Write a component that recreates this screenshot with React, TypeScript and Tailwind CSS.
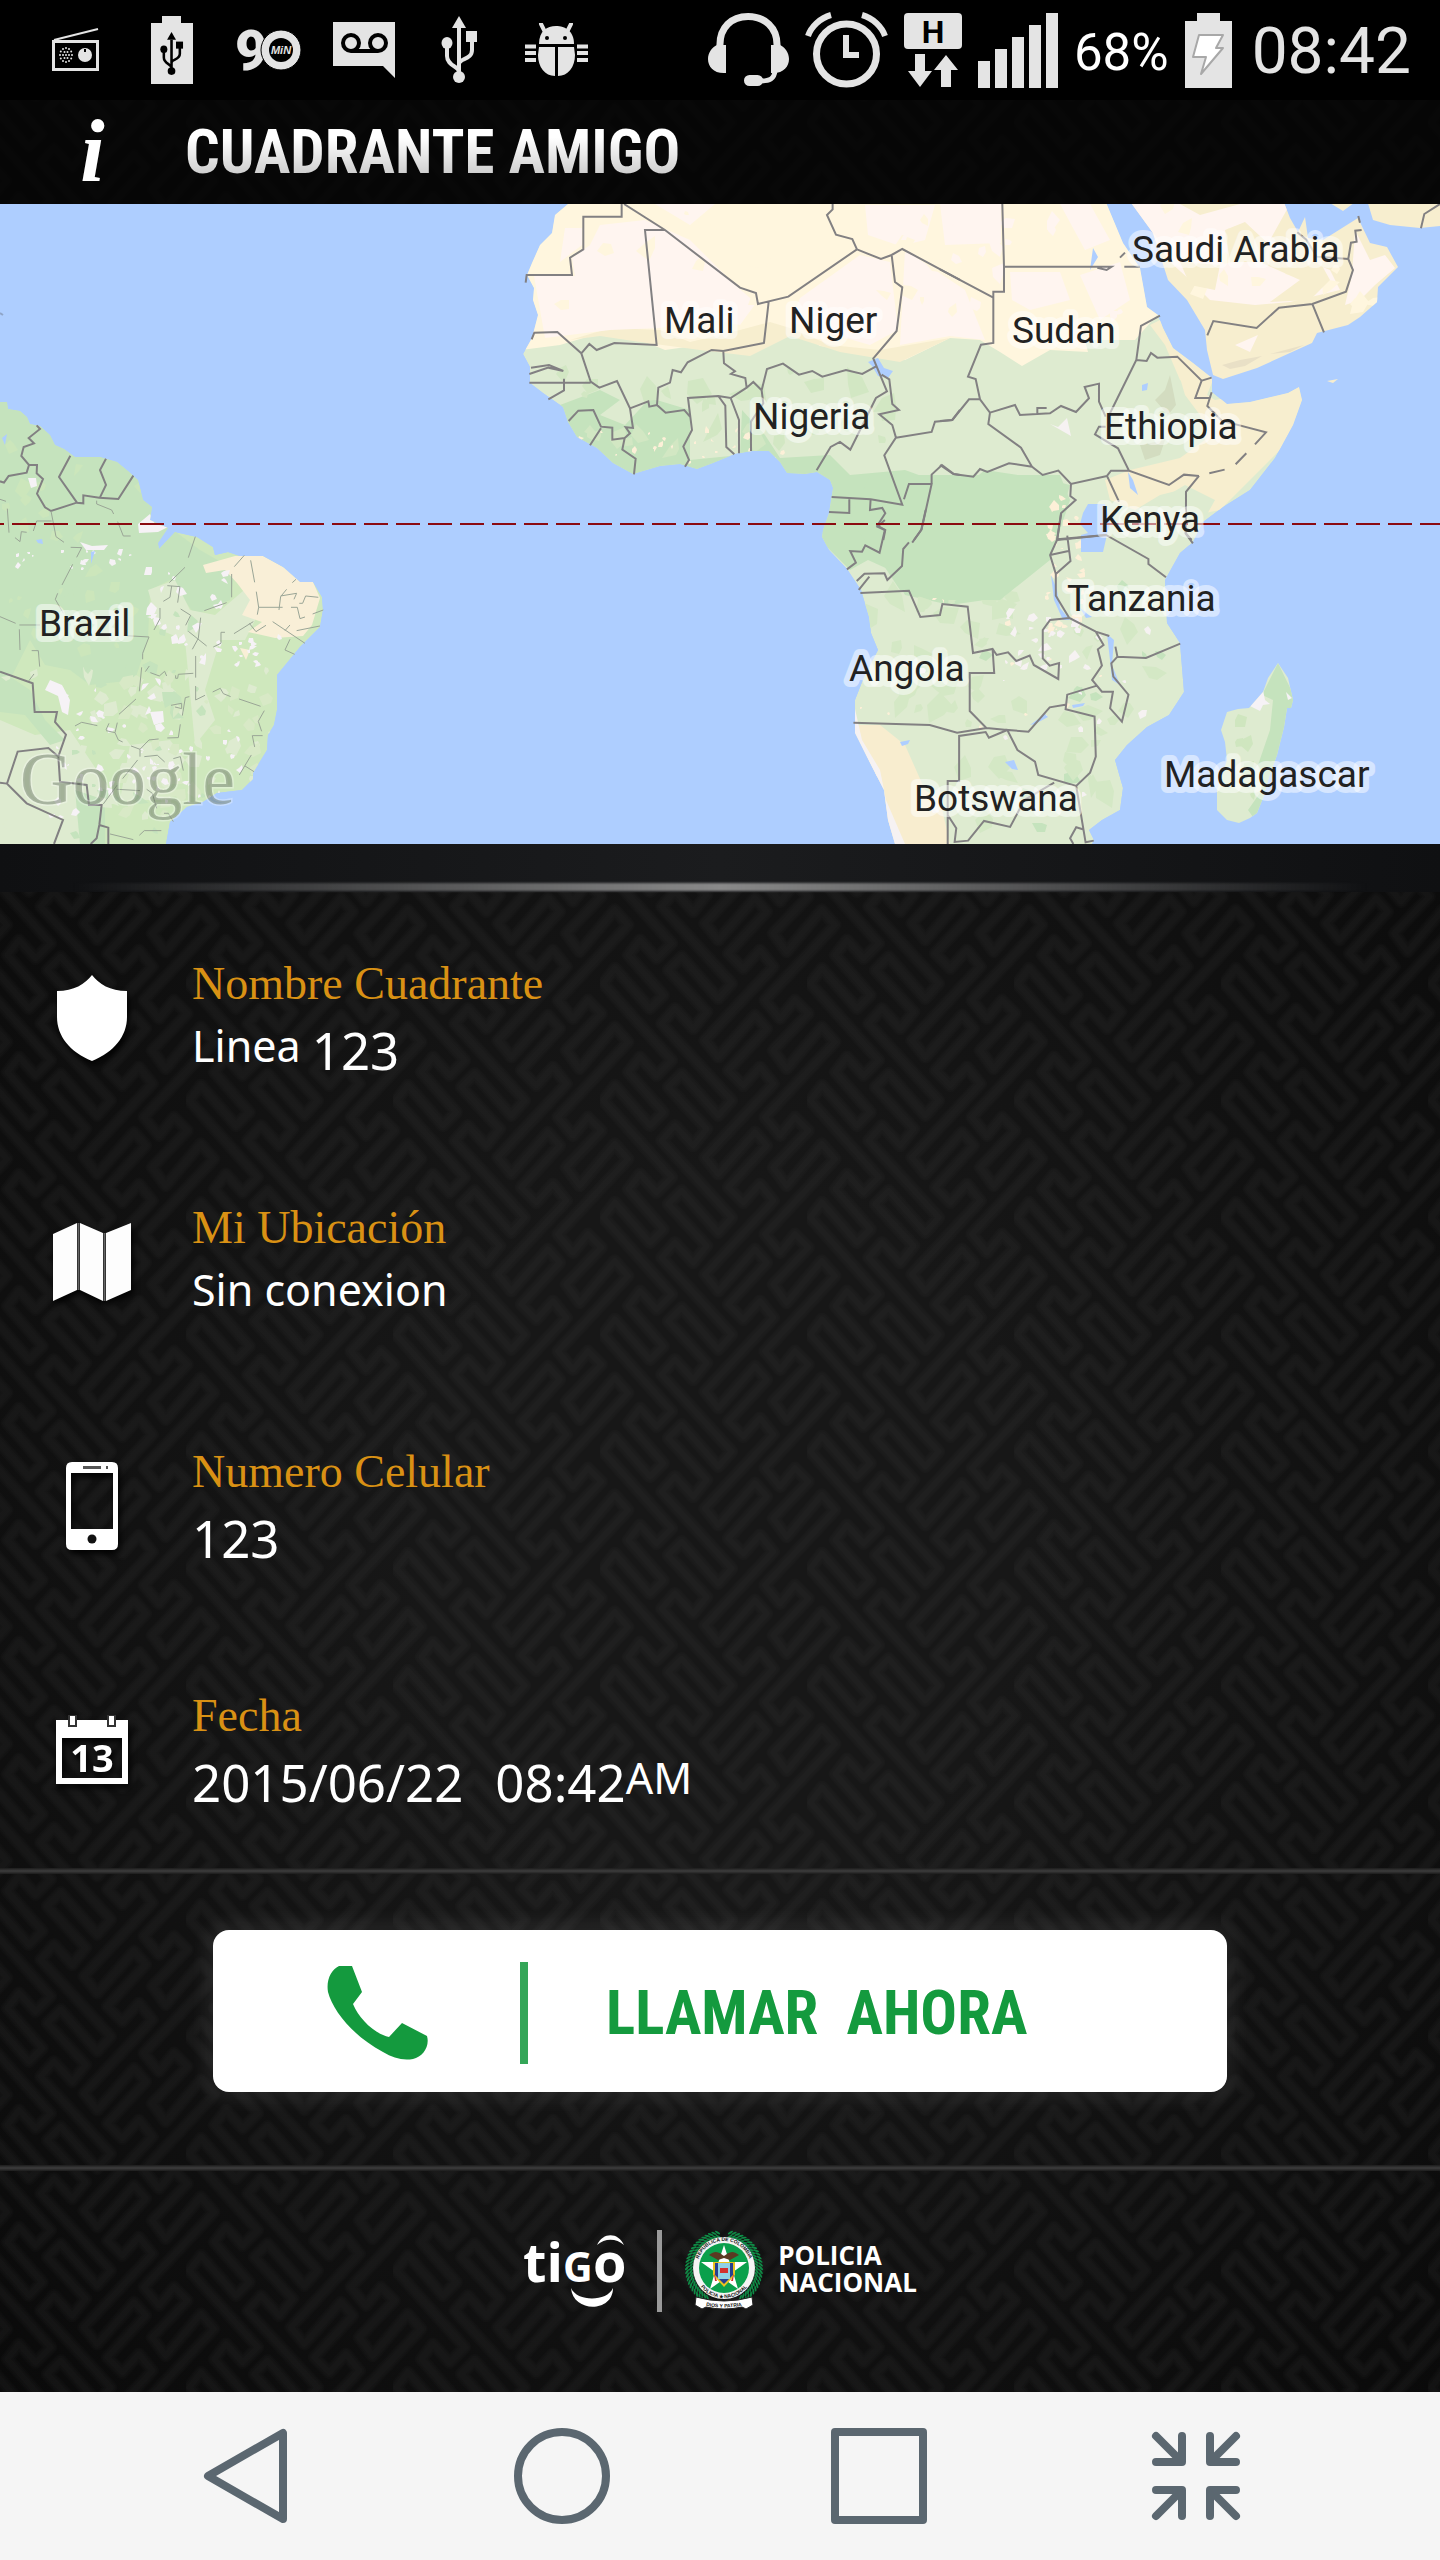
import React from "react";

const ICON = "#e4e4e4";
const SLATE = "#5b6770";

/* ---------- dark woven backdrop ---------- */

const SNAKES = [
  "M215,710L10,480L45,435L150,555L190,515L85,395L120,350L170,405L215,360L10,130L45,85L150,205L190,165L85,45L120,0L170,55L215,10L10,-220",
  "M395,830L185,600L225,555L280,615L320,565L205,440L245,400L355,525L395,480L185,250L225,205L280,265L320,215L205,90L245,50L355,175L395,130L185,-100L225,-145L280,-85L320,-135L205,-260",
  "M520,-270L315,-50L355,0L465,-125L500,-85L385,40L430,85L480,30L520,80L315,300L355,350L465,225L500,265L385,390L430,435L480,380L520,430L315,650",
  "M705,-45L495,180L540,235L585,180L625,220L520,330L560,385L665,260L705,305L495,530L540,585M705,-395L495,-170L540,-115L585,-170L625,-130L520,-20L560,35L665,-90L705,-45",
];

function Weave({ id, className }: { id: string; className: string }) {
  return (
    <svg className={className} aria-hidden="true">
      <defs>
        <pattern id={id} width="207" height="117" patternUnits="userSpaceOnUse" x="186" y="96">
          <g transform="scale(0.3333 0.3343)" fill="none" stroke="#fff" strokeLinejoin="round">
            {[-621, 0].map((dx) => (
              <g key={dx} transform={`translate(${dx} 0)`}>
                {SNAKES.map((d, i) => (
                  <g key={i}>
                    <path d={d} strokeWidth="38" opacity="0.012" />
                    <path d={d} strokeWidth="28" opacity="0.012" />
                    <path d={d} strokeWidth="16" opacity="0.012" />
                  </g>
                ))}
              </g>
            ))}
          </g>
        </pattern>
      </defs>
      <rect width="100%" height="100%" fill={`url(#${id})`} />
    </svg>
  );
}

/* ---------- map ---------- */

const AFRICA =
  "M568,200L568,204L555,215L552,233L540,245L532,263L527,275L534,288L533,300L538,315L532,338L523,354L530,367L530,383L543,393L563,407L568,422L577,437L597,448L613,463L633,474L660,466L680,464L697,469L713,463L735,454L752,451L769,451L780,462L787,473L805,474L817,472L830,480L833,488L829,513L823,530L822,537L829,550L847,569L861,590L869,617L871,633L878,650L864,677L855,700L855,733L867,757L884,790L888,820L895,844L1092,844L1094,840L1089,830L1102,820L1120,810L1123,788L1115,760L1127,745L1147,727L1169,715L1184,692L1180,643L1167,623L1165,580L1180,553L1193,542L1203,522L1223,507L1250,490L1275,458L1293,425L1302,400L1299,387L1288,393L1250,402L1227,404L1212,392L1212,378L1193,363L1173,348L1163,328L1158,315L1147,307L1140,268L1123,243L1105,200Z";
const ARABIA =
  "M1129,200L1153,233L1168,280L1187,300L1205,330L1207,350L1213,375L1223,379L1257,368L1312,343L1317,333L1348,325L1360,317L1377,302L1378,287L1398,267L1387,247L1370,243L1358,218L1323,240L1308,238L1305,217L1298,232L1290,218L1283,200Z";
const IRAN = "M1325,200L1343,211L1358,200ZM1367,200L1373,220L1390,225L1420,228L1440,226V200Z";
const AMERICA =
  "M0,402L7,402L8,409L20,411L27,417L30,424L40,426L50,435L55,445L64,449L75,457L100,457L117,462L128,471L138,480L143,500L152,507L150,520L168,528L158,543L159,549L175,532L197,537L213,547L215,555L228,552L240,556L263,556L283,567L300,582L313,582L322,597L323,610L320,627L300,647L277,675L277,710L274,725L268,735L267,750L253,773L253,779L242,790L217,793L203,802L187,807L170,822L166,844H0Z";
const MADAGASCAR =
  "M1278,663L1288,678L1293,700L1291,708L1287,708L1284,727L1277,755L1269,777L1263,798L1257,813L1250,818L1239,823L1227,820L1217,810L1217,790L1227,760L1225,742L1221,730L1227,712L1238,709L1249,708L1263,692L1268,678Z";

const BORDERS_WEST =
  "M425,12V50H310V148L270,173L276,225H140L137,248M432,12L555,90L780,263L828,279L834,312L925,290L1131,148L1117,117L1068,104L1041,45L1058,28V12M555,90H495L530,435L403,429L350,450L328,432L304,460L232,396L163,398L155,418M866,306L852,429L730,453L695,450L623,487L603,517L578,510L570,548L535,563L531,615L557,638L613,630L630,650M304,460L332,545L358,563L411,543L450,625L459,684L437,682L450,700L434,714L397,719V683L363,680L340,630L295,632L266,663M148,548H332M252,536V571L205,598M153,503L207,495L250,513L205,503L148,522M363,685L330,736M434,714L427,749L467,776L462,823M450,625L505,604L508,620L531,615M730,453L732,490L765,514L753,522L796,534L800,563L752,594L715,588L624,594L636,690L610,740L627,780L615,800M715,588L736,617L739,741L763,763M752,594L777,660V760M800,563L820,546L845,571L850,610L813,665V753M845,571L861,507L909,491L957,524L997,513L1027,530L1098,510L1147,522L1187,500M1131,148L1203,177L1235,165L1267,147L1440,240M1235,165L1245,246L1267,262L1250,393L1180,475L1221,574L1188,594L1111,749L1080,726L1052,741L1010,811M1205,524L1228,538L1237,612L1257,630L1198,643L1237,675L1248,713L1213,766L1267,914L1172,898L1055,891M1108,898V939L1047,936M1172,898L1170,930L1207,924L1216,940L1192,977L1216,990L1210,1020M1248,713L1355,696L1365,665L1417,660L1440,630M1272,898L1287,852H1355L1325,988L1302,1020M1355,852V824L1386,795L1422,822L1440,825";
const BORDERS_EAST =
  "M187,12L192,200V275H160V429L123,434L84,530L107,537L120,598L150,638L145,672L243,743L276,800M0,208L160,293M192,200H515L500,210L472,203M553,200H600M540,173L555,158M0,663L37,660L87,598H120M150,638L225,615L240,645L330,640L363,618L408,636L447,595L434,561L477,551V605L497,650M292,640V624H320M660,347L603,378L589,480L510,640M589,480L620,483L633,459L652,473L712,470L785,542L815,533M785,542L766,594H808M815,577L802,618L845,662L978,697L945,733M919,760L887,793M854,809L808,820M777,828L738,876V1000L755,1020M777,828L732,824L687,855L567,812L534,745L465,703L477,680H497M567,812H513L501,828L537,905M501,828L393,852L355,812L308,825L276,800L207,790L142,816L120,807L100,830L40,822L0,795M393,852L391,888L407,900L363,940L352,1018L497,1005M802,406L820,363L950,384L1017,323L1117,312L1218,275L1239,210L1225,177L1130,170L1100,120L1072,97M1117,312L1152,397M1225,177L1233,128L1250,125L1246,92L1265,90M1255,48L1260,68M1443,85L1453,42L1500,12";
const BORDERS_SOUTH =
  "M208,60L190,80L208,90L195,158L160,136L152,155L123,153L137,188L115,208M308,30L297,90L275,128M267,127L253,147L250,198L214,240L207,220L158,221L139,243M170,230L144,270M148,279L267,272L295,351L343,345L349,312L411,320L424,459L472,447L482,465L510,457L530,483L563,467L573,495L633,537L635,489L612,497L595,475V390L613,360L660,354M472,447L476,519H416V633L457,684L385,698L318,675L131,668M640,42L630,120L613,165L627,222V287L660,354L725,395L758,408M630,120L750,105L854,177V192L897,232M655,107L663,183L627,222M613,165L658,153M945,60V100L963,130M725,395L744,435L730,448L740,497L716,540L740,575H767L760,625L789,665L805,584L768,530L763,490L778,470L848,474L932,431M778,470L773,440M728,557L655,584L651,628L722,650L725,770L711,818L677,858L584,825L576,785L533,750L508,690L560,695L612,622L650,614M457,684L508,690L463,713L455,696L390,708V843H362V1032M362,945L383,985L379,1026L412,1022L451,963L515,981L550,900L623,848M677,858L700,1027L720,1022M693,988L677,982L662,1015L670,1032";
const BORDERS_AMERICA =
  "M110,136L120,147L86,174L102,190L71,201L64,228L87,255H111L110,280L129,297L111,341L135,382L153,393L230,368L250,370V346L298,353L355,357L400,287M87,255L80,278L26,288L12,308L0,304M211,227L177,291L231,368M318,236L300,270L318,315L300,352M0,875L98,910L104,996H171L165,1026L198,1064L175,1130L145,1104L53,1115L21,1211L80,1270L189,1320L162,1392M0,1208L21,1211M175,1130L180,1205L260,1215L267,1275H305L298,1335L290,1375L272,1392M298,1335L325,1343V1392";
const STATES_AMERICA =
  "M0,358L18,364M22,386L27,458M290,362V372L335,390L341,402M353,425L370,468H392M153,393L168,470L192,487M155,423H110L100,453M45,473L60,485L64,455L80,457M212,502L245,503L230,532M218,553L186,615M173,640L166,658L190,700M0,710L47,730M58,735H120M58,748L60,810M95,812H115L119,860M102,882L86,903M586,470L565,533M555,562L508,608M502,617L540,620L533,668M515,618L510,652L490,664M542,687L572,706L557,736M480,684V716L462,750M378,767L447,771L428,820V838M425,862L418,934M408,957L357,1003M225,1038L245,1027L292,1037M318,1050L327,1030M352,1028L345,1058L318,1052M345,1058L355,1080L368,1086M680,668L613,692M695,582V652M752,541L764,607M769,635L776,682L772,704M776,682H848M837,690L842,650L860,628M842,648L890,640L882,658M733,526L703,560M888,598L877,608M955,652L917,648L908,670H898M873,682H892L900,716L915,711M970,690L938,702M960,738L890,752M818,725L915,790M870,735L855,752M870,778L855,810L884,823M760,725L702,761M748,730L768,755L798,736M675,757H663V790L640,801M602,713L595,775L577,808M565,754L620,798M587,828V893M587,918V960L615,946M638,936L661,925L670,941L692,950M717,957L782,979M793,992L775,1024L785,1054M788,1067H757L764,1101M754,1125L718,1185M735,1158L762,1175M568,950L556,953L547,1007M541,1033L535,1073L502,1074M476,1077L447,1080L420,1108L393,1098M420,1108V1130M433,1130L472,1126L494,1146M413,1140L368,1196M520,1136L541,1130L550,1172M352,1215L310,1272M350,1228L420,1232M440,1228L457,1240L470,1285M492,1300H505L520,1325M580,880L535,883L533,895H527V886M451,878L478,888L494,874L500,888M448,858L436,875M330,1362L400,1379M418,1366L433,1352H484M513,976L545,970V986L525,981";

function scatter(seed: number, n: number, x: number, y: number, w: number, h: number, size: number) {
  let s = seed;
  const r = () => {
    s = (s * 1103515245 + 12345) % 2147483648;
    return s / 2147483648;
  };
  let d = "";
  for (let i = 0; i < n; i++) {
    const cx = x + r() * w;
    const cy = y + r() * h;
    const k = size * (0.4 + r());
    const a0 = r() * 6;
    for (let j = 0; j < 5; j++) {
      const a = a0 + (j / 5) * 6.28;
      const q = k * (0.3 + r() * 0.9);
      d += `${j ? "L" : "M"}${Math.round(cx + Math.cos(a) * q)},${Math.round(cy + Math.sin(a) * q)}`;
    }
    d += "Z";
  }
  return d;
}

const LABELS: [string, number, number][] = [
  ["Saudi Arabia", 1132, 262],
  ["Mali", 664, 333],
  ["Niger", 789, 333],
  ["Sudan", 1012, 343],
  ["Nigeria", 753, 429],
  ["Ethiopia", 1104, 439],
  ["Kenya", 1100, 532],
  ["Brazil", 39, 636],
  ["Tanzania", 1067, 611],
  ["Angola", 849, 681],
  ["Botswana", 914, 811],
  ["Madagascar", 1164, 787],
];

function WorldMap() {
  return (
    <svg
      role="img"
      aria-label="Mapa"
      viewBox="0 204 1440 640"
      preserveAspectRatio="xMidYMid slice"
      className="block h-[640px] w-full bg-[#aeceff]"
    >
      <defs>
        <clipPath id="africa"><path d={AFRICA} /></clipPath>
        <clipPath id="arabia"><path d={ARABIA + IRAN} /></clipPath>
        <clipPath id="america"><path d={AMERICA} /></clipPath>
        <clipPath id="madagascar"><path d={MADAGASCAR} /></clipPath>
      </defs>

      <g clipPath="url(#africa)">
        <path d={AFRICA} fill="#deebd0" />
        <path fill="#fff6de" d="M500,200H1180V345L1157,315L1135,340L1085,340L1088,352L1050,350L1022,366L1000,352L980,340L950,338L905,360L880,355L850,350L820,346L790,328L750,348L700,345L665,350L640,340L600,333L560,345L520,350Z" />
        <path fill="#f7eecf" d="M570,340L610,328L660,330L690,342L740,330L770,322L790,328L830,345L880,350L950,338L900,362L840,352L790,336L750,356L700,350L640,342L600,336Z" />
        <path fill="#fff5f0" d="M534,276H575L572,258L590,245L600,225L645,220L690,240L735,285L756,303L740,325L700,318L660,328L610,330L545,338ZM565,228H582V245L560,262ZM655,204L715,204L690,225ZM800,298L860,255L890,262L898,330L870,345L790,322ZM865,205H935L925,240L900,246L868,235ZM940,204H1001V243L945,245ZM905,250L965,290L985,340L950,336L900,345ZM1010,272H1060L1070,300L1030,310L1012,300ZM1080,275L1120,262L1130,300L1100,320ZM1060,204L1090,204L1110,240L1085,250Z" />
        <path fill="#fff6de" d={scatter(11, 24, 540, 205, 560, 110, 10)} />
        <path fill="#fff5f0" d={scatter(27, 18, 900, 205, 240, 120, 10)} />
        <path fill="#c5e3bd" d="M560,405L600,390L620,400L600,415L625,425L650,398L690,410L690,460L740,455L742,410L765,435L780,458L830,455L850,475L905,470L960,490L985,470L1050,480L1070,485L1060,520L1045,560L1010,555L985,600L950,605L905,595L890,570L868,560L850,570L820,540L820,480L700,480L600,475L560,430Z" />
        <path fill="#d4e8c5" d={scatter(5, 60, 640, 580, 400, 140, 14)} />
        <path fill="#d2e7c3" d={scatter(8, 30, 560, 370, 340, 80, 11)} />
        <path fill="#c5e3bd" d={scatter(13, 12, 860, 580, 320, 260, 10)} />
        <path fill="#d4e8c5" d={scatter(17, 34, 880, 620, 300, 220, 11)} />
        <path fill="#c5e3bd" d="M870,475H1060L1070,500L1060,530L1050,560L1000,600H930L900,590L880,560L850,520Z" />
        <path fill="#f7eecf" d="M1180,378L1215,400L1310,380L1300,430L1220,510L1195,515L1180,490L1160,495L1135,510L1110,500L1105,480L1130,470L1180,458L1205,440L1200,415L1185,395ZM1160,320L1215,375L1205,400L1180,380L1165,345L1150,325Z" />
        <path fill="#deebd0" d="M1160,500L1185,485L1215,500L1190,545H1160Z" />
        <path fill="#f8edcf" d="M855,725L880,725L905,745L925,790L940,800L950,844H890L880,790Z" />
        <path fill="#f6f2f2" d="M853,700L862,740L880,770L886,800L905,844H893L880,790L853,735ZM1050,424L1058,427L1067,418L1071,436Z" />
        <path fill="#fdf0d8" d={scatter(31, 24, 570, 430, 220, 35, 3) + scatter(3, 36, 1045, 490, 40, 150, 5) + scatter(44, 16, 860, 580, 250, 150, 3)} />
        <path fill="#f6f2f2" d={scatter(9, 22, 990, 610, 90, 60, 5) + scatter(71, 20, 870, 620, 280, 190, 4)} />
        <path fill="#d3dcc0" d="M1170,375L1176,405L1168,415L1155,400L1165,390ZM1140,445L1165,440L1160,455L1145,460Z" />
        <path fill="#aeceff" d="M868,362L878,358L884,368L893,371L888,378L878,376L872,366ZM1142,385L1148,383L1147,390L1142,391ZM1088,504L1105,504L1110,522L1103,552L1081,552V535L1088,533L1080,524L1083,513ZM1128,472L1133,480L1138,495L1130,488ZM1051,575L1057,590L1060,608L1070,620L1063,620L1054,600ZM1080,608L1092,617L1086,618ZM1107,634L1114,640L1112,665L1120,685L1112,680L1110,660ZM1090,270L1093,248L1098,257ZM1072,705L1085,703L1083,706L1073,708ZM1030,725L1045,714L1048,717L1035,724ZM1005,762L1014,760L1018,770L1012,769ZM900,742L910,740L908,744L902,746Z" />
      </g>

      <path d={ARABIA + IRAN} fill="#f7eecf" />
      <g clipPath="url(#arabia)">
        <path fill="#fff5f0" d="M1130,204H1180L1200,215L1240,204H1290L1270,240L1310,262L1330,270L1340,290L1290,302L1255,305L1210,300L1190,280L1170,262ZM1355,230L1370,260L1385,255L1395,268L1375,285L1360,300L1345,305L1352,275ZM1235,345L1258,335L1250,352Z" />
        <path fill="#fff6de" d={scatter(23, 16, 1140, 205, 240, 100, 10)} />
        <path fill="#f7eecf" d="M1225,230L1245,222L1275,250L1320,262L1330,280L1310,300L1270,302L1300,280L1260,262L1230,262ZM1180,262L1220,265L1215,290L1190,285Z" />
        <path fill="#e9e0c6" d="M1222,365L1240,360L1262,356L1245,366L1230,369ZM1270,354L1304,345L1290,352Z" />
      </g>
      <path d="M1327,381L1338,379L1333,383Z" fill="#f7eecf" />

      <g clipPath="url(#america)">
        <path d={AMERICA} fill="#cfe8bd" />
        <path fill="#c5e3bd" d="M0,400H160V520L200,550L235,570L230,600L195,615L170,580L150,590L148,640L135,680L90,685L70,670L45,665L30,640L0,700V550Z" />
        <path fill="#deebd0" d="M0,720L35,735L70,730L90,760L110,790L95,844H0ZM148,590L175,580L190,610L215,615L250,585L260,610L245,640L220,640L205,690L215,720L195,745L185,640L160,630ZM130,745L170,740L185,760L160,800L120,800Z" />
        <path fill="#c5e3bd" d="M75,790L105,800V844H80ZM0,670L30,690L45,720L65,740L50,745L25,715L0,712Z" />
        <path fill="#f9efd7" d="M203,565L235,556H263L285,568L303,582H313L320,598L312,625L303,636L275,638L248,632L262,622L242,615L250,600L237,583L225,570L206,573ZM240,648L250,650L246,660Z" />
        <path fill="#deebd0" d={scatter(15, 46, 0, 660, 280, 180, 8)} />
        <path fill="#c5e3bd" d={scatter(19, 30, 60, 560, 150, 280, 7)} />
        <path fill="#cce6bb" d={scatter(29, 26, 0, 430, 150, 240, 8)} />
        <path fill="#d8e9c6" d={scatter(39, 34, 120, 660, 150, 160, 8)} />
        <path fill="#f6f2f6" d={scatter(51, 24, 145, 570, 80, 90, 5) + scatter(61, 36, 40, 680, 120, 140, 4) + scatter(63, 32, 130, 730, 110, 80, 3) + scatter(73, 14, 230, 635, 50, 30, 4) + scatter(77, 16, 15, 545, 120, 25, 3)} />
        <path fill="#f6f2f6" d="M80,542L92,546L108,545L104,550L86,550ZM138,524L150,514L155,524L168,527L158,532L139,533ZM28,478L36,478L37,486L31,488ZM50,680L62,685L70,700L68,715L62,712L58,696L45,690ZM150,712L163,711L164,722L154,725Z" />
        <path fill="#aeceff" d="M91,552L95,551L91,564ZM36,540L42,539L43,544L38,543ZM2,438L7,434L5,445Z" />
      </g>

      <path d={MADAGASCAR} fill="#deebd0" />
      <g clipPath="url(#madagascar)">
        <path fill="#c5e3bd" d="M1278,663L1296,700L1275,770L1255,820L1248,810L1262,790L1258,765L1270,730L1273,700L1262,695Z" />
        <path fill="#cfe6bf" d={scatter(83, 8, 1220, 700, 50, 110, 7)} />
        <path fill="#f6f2f6" d="M1250,706L1263,690L1265,700L1270,704L1263,705L1260,711ZM1286,692L1292,698L1288,700Z" />
      </g>

      <g fill="none" stroke="#828082" strokeWidth="2">
        <path vectorEffect="non-scaling-stroke" transform="matrix(.3333 0 0 .3333 480 200)" d={BORDERS_WEST} />
        <path vectorEffect="non-scaling-stroke" transform="matrix(.3333 0 0 .3333 940 200)" d={BORDERS_EAST} />
        <path vectorEffect="non-scaling-stroke" transform="matrix(.408 0 0 .3333 800 500)" d={BORDERS_SOUTH} />
        <path vectorEffect="non-scaling-stroke" transform="matrix(.3333 0 0 .3333 0 380)" d={BORDERS_AMERICA} />
        <path vectorEffect="non-scaling-stroke" strokeWidth="1" stroke="#9aa596" transform="matrix(.3333 0 0 .3333 0 380)" d={STATES_AMERICA} />
      </g>
      <path d="M0,313L3,315" stroke="#8fa5c8" strokeWidth="2" />

      <path d="M-20,524H1440" stroke="#8b0a10" strokeWidth="2" strokeDasharray="24 8" />

      <g fontFamily="Roboto, sans-serif" fontSize="37" fill="#222" stroke="#fff" strokeOpacity="0.5" strokeWidth="12" strokeLinejoin="round" paintOrder="stroke">
        {LABELS.map(([name, x, y]) => (
          <text key={name} x={x} y={y}>{name}</text>
        ))}
      </g>
      <text x="20" y="804" fontFamily="Liberation Serif, serif" fontSize="73" fill="#5a6a55" fillOpacity="0.45" stroke="#fff" strokeOpacity="0.3" strokeWidth="3" paintOrder="stroke">
        Google
      </text>
    </svg>
  );
}

/* ---------- status bar ---------- */

function Usb({ color }: { color: string }) {
  return (
    <g fill="none" stroke={color} strokeWidth="4">
      <path d="M18,12V60M18,56C18,50 6,50 6,40V28M18,48C18,42 31,44 31,34V22" />
      <path d="M18,0L25,12H11Z" fill={color} stroke="none" />
      <ellipse cx="18" cy="61" rx="6" ry="6" fill={color} stroke="none" />
      <ellipse cx="6" cy="27" rx="5.500" ry="6" fill={color} stroke="none" />
      <rect x="25" y="15" width="11" height="11" fill={color} stroke="none" />
    </g>
  );
}

function Cell({ children }: { children: React.ReactNode }) {
  return <span className="flex w-24 shrink-0 justify-center">{children}</span>;
}

function StatusBar() {
  const dots: [number, number][] = [];
  [[0, 1], [3, 6], [6, 12]].forEach(([r, n]) => {
    for (let i = 0; i < n; i++) dots.push([14 + r * Math.cos((i / n) * 6.283), 27 + r * 1.15 * Math.sin((i / n) * 6.283)]);
  });
  return (
    <div className="flex h-[100px] items-center bg-black pr-[29px] pl-7 font-[Roboto,sans-serif] text-[#e4e4e4]">
      <Cell>
        <svg width="48" height="44" viewBox="0 0 48 44" aria-hidden="true">
          <path d="M2,12L46,1" stroke={ICON} strokeWidth="2" />
          <rect x="1.500" y="13.500" width="44" height="28" fill="none" stroke={ICON} strokeWidth="3" />
          {dots.map(([x, y], i) => <circle key={i} cx={x} cy={y} r="1" fill={ICON} />)}
          <circle cx="33" cy="27" r="7" fill={ICON} />
          <path d="M33,21V24" stroke="#000" strokeWidth="2" />
        </svg>
      </Cell>
      <Cell>
        <svg width="42" height="68" viewBox="0 0 42 68" aria-hidden="true">
          <path d="M11,0H30V7H42V68H0V7H11Z" fill={ICON} />
          <g transform="translate(9 16) scale(.64)"><Usb color="#000" /></g>
        </svg>
      </Cell>
      <Cell>
        <svg width="70" height="72" viewBox="-3 -15 70 72" aria-label="90 Min">
          <text x="-1" y="41" fontFamily="Roboto, sans-serif" fontWeight="900" fontSize="56" fill={ICON}>9</text>
          <circle cx="45" cy="21" r="20" fill={ICON} stroke="#000" strokeWidth="1" />
          <circle cx="45" cy="21" r="12" fill="#000" />
          <text x="45" y="25" textAnchor="middle" fontFamily="Liberation Sans, sans-serif" fontStyle="italic" fontWeight="700" fontSize="11" fill={ICON}>MiN</text>
        </svg>
      </Cell>
      <Cell>
        <svg width="62" height="56" viewBox="0 0 62 56" aria-hidden="true">
          <path d="M0,0H62V56L50,44H0Z" fill={ICON} />
          <g fill="none" stroke="#000" strokeWidth="4">
            <circle cx="18" cy="21" r="8" />
            <circle cx="45" cy="21" r="8" />
            <path d="M18,29H45" />
          </g>
        </svg>
      </Cell>
      <Cell>
        <svg width="38" height="68" viewBox="0 0 38 68" aria-hidden="true"><Usb color={ICON} /></svg>
      </Cell>
      <Cell>
        <svg width="63" height="54" viewBox="0 0 63 54" aria-hidden="true">
          <g stroke={ICON} strokeWidth="4">
            <path d="M16,1L20,9M46,1L42,9" strokeLinecap="round" />
            <path d="M0,23.500H11M0,30H11M0,37H11M52,23.500H63M52,30H63M52,37H63" />
          </g>
          <path d="M14,21C14,8 22,3 31,3S49,8 49,21Z" fill={ICON} />
          <path d="M14,24H30V53C20,53 13,44 13,32ZM33,24H49L50,32C50,44 43,53 33,53Z" fill={ICON} />
          <circle cx="22" cy="15" r="2" />
          <circle cx="40" cy="15" r="2" />
        </svg>
      </Cell>

      <div className="ml-auto flex shrink-0 items-center gap-4">
        <svg width="81" height="74" viewBox="0 0 81 74" aria-hidden="true">
          <path d="M12,34C11,14 24,3.500 40,3.500S70,14 69,34" fill="none" stroke={ICON} strokeWidth="7" />
          <path d="M18,32V60C6,61 0,54 0,46C0,40 4,34 9,32ZM63,32V60C75,61 81,54 81,46C81,40 77,34 72,32Z" fill={ICON} />
          <path d="M67,58C66,66 62,68 52,68" fill="none" stroke={ICON} strokeWidth="5" />
          <rect x="36" y="62" width="19" height="11" rx="5.500" fill={ICON} />
        </svg>
        <svg width="83" height="76" viewBox="0 0 83 76" aria-hidden="true">
          <g fill="none" stroke={ICON}>
            <circle cx="41.500" cy="42" r="30" strokeWidth="7" />
            <path d="M3,24C6,15 15,6 26,3M80,24C77,15 68,6 57,3" strokeWidth="6" />
            <path d="M41,23V43H54" strokeWidth="6" />
          </g>
        </svg>
        <svg width="58" height="75" viewBox="0 0 58 75" aria-label="H">
          <rect width="58" height="36" rx="4" fill={ICON} />
          <text x="29" y="30" textAnchor="middle" fontFamily="Roboto, sans-serif" fontWeight="700" fontSize="32" fill="#000">H</text>
          <path d="M11,41H21V58H28L16,74L4,58H11ZM37,74H47V57H54L42,42L30,57H37Z" fill={ICON} />
        </svg>
        <svg width="80" height="75" viewBox="0 0 80 75" aria-hidden="true">
          <path fill={ICON} d="M0,48H12V75H0ZM17,36H29V75H17ZM34,24H46V75H34ZM51,12H63V75H51ZM68,0H80V75H68Z" />
        </svg>
        <span className="pt-1 text-[51px] leading-none text-white">68%</span>
        <svg width="47" height="75" viewBox="0 0 47 75" aria-hidden="true">
          <path d="M12,0H35V8H47V75H0V8H12Z" fill={ICON} />
          <path d="M14,22H38L31,35H38L16,61L21,44H8Z" fill="#fff" stroke="#a8a8a8" strokeWidth="2" strokeLinejoin="round" />
        </svg>
        <time className="ml-1 pt-1 text-[64px] leading-none">08:42</time>
      </div>
    </div>
  );
}

/* ---------- list icons ---------- */

const shadow = "drop-shadow-[2px_4px_3px_rgba(0,0,0,0.9)]";

function ShieldIcon() {
  return (
    <svg width="72" height="86" viewBox="0 0 72 86" className={shadow} aria-hidden="true">
      <path d="M36,0C43,9 54,16 71,16V42C71,61 58,77 36,86C14,77 1,61 1,42V16C18,16 29,9 36,0Z" fill="#fff" />
    </svg>
  );
}
function MapIcon() {
  return (
    <svg width="78" height="78" viewBox="0 0 78 78" className={shadow} aria-hidden="true">
      <path d="M0,11L24,0V67L0,78ZM27,0L50,10V78L27,67ZM53,10L78,0V67L53,78Z" fill="#fdfdfd" />
      <path d="M25.500,0V67M51.500,10V78" stroke="#666" strokeWidth="2" />
    </svg>
  );
}
function PhoneIcon() {
  return (
    <svg width="54" height="90" viewBox="0 0 54 90" className={shadow} aria-hidden="true">
      <path fillRule="evenodd" d="M7,1H47Q53,1 53,7V83Q53,89 47,89H7Q1,89 1,83V7Q1,1 7,1ZM6,12V68H48V12Z" fill="#fff" />
      <path d="M18,6.500H36M41,6.500H43" stroke="#555" strokeWidth="3" />
      <circle cx="27" cy="78" r="4.500" fill="#111" />
    </svg>
  );
}
function CalendarIcon() {
  return (
    <svg width="74" height="70" viewBox="0 0 74 70" className={shadow} aria-label="13">
      <path fillRule="evenodd" d="M1,5H73V69H1ZM7,23V63H67V23Z" fill="#fff" />
      <path d="M14,0H21V11H14ZM53,0H60V11H53Z" fill="#fff" stroke="#333" strokeWidth="2" />
      <text x="37" y="57" textAnchor="middle" fontFamily="Open Sans, sans-serif" fontWeight="700" fontSize="38" fill="#fff">13</text>
    </svg>
  );
}

function Row({ icon, label, children }: { icon: React.ReactNode; label: string; children: React.ReactNode }) {
  return (
    <div className="flex h-[244px] items-center">
      <div className="flex w-[192px] shrink-0 justify-center pr-2">{icon}</div>
      <div>
        <dt className="font-['Liberation_Serif',serif] text-[46px] leading-[56px] text-[#d99114]">{label}</dt>
        <dd className="mt-2 flex min-h-[60px] items-start font-['Noto_Sans',sans-serif] text-[51px] leading-[60px] text-white">
          {children}
        </dd>
      </div>
    </div>
  );
}

function Rule() {
  return <div className="h-[6px] bg-linear-to-b from-[#1c1c1c] via-[#3d3d3d] to-[#1c1c1c]" />;
}

/* ---------- footer logos ---------- */

function TigoLogo() {
  return (
    <svg width="104" height="100" viewBox="0 -12 104 100" aria-label="tigo">
      <g fontFamily="Open Sans, sans-serif" fontWeight="700" fill="#fff">
        <text x="0" y="49" fontSize="54">ti</text>
        <text x="40" y="49" fontSize="41">G</text>
        <text x="70" y="49" fontSize="54">o</text>
      </g>
      <path d="M74,12C80,-1 95,-1 101,12C93,5 82,5 74,12Z" fill="#fff" />
      <path d="M48,55C54,69 84,69 90,55C90,80 50,80 48,55Z" fill="#fff" />
    </svg>
  );
}

function PoliceCrest() {
  const leaves = [];
  for (let i = 0; i < 26; i++) {
    const a = ((-80 + i * 5.6) * Math.PI) / 180;
    leaves.push([Math.cos(a), Math.sin(a), -80 + i * 5.6]);
  }
  return (
    <svg width="80" height="84" viewBox="0 -2 80 84" aria-label="Dios y Patria">
      <defs>
        <path id="arcTop" d="M13,37A27,27 0 0 1 67,37" />
        <path id="arcBottom" d="M10,37A30,30 0 0 0 70,37" />
        <path id="ribbon" d="M14,73Q40,80 66,73" />
      </defs>
      {leaves.map(([c, s, a], i) => (
        <g key={i} fill="#0f8a45">
          {[33, 37].map((r) => (
            <React.Fragment key={r}>
              <ellipse cx={40 + c * r} cy={38 + s * r} rx="3" ry="1" transform={`rotate(${a + 50} ${40 + c * r} ${38 + s * r})`} />
              <ellipse cx={40 - c * r} cy={38 + s * r} rx="3" ry="1" transform={`rotate(${-a - 50} ${40 - c * r} ${38 + s * r})`} />
            </React.Fragment>
          ))}
        </g>
      ))}
      <circle cx="40" cy="37" r="31" fill="#f4f4f4" />
      <circle cx="40" cy="37" r="25" fill="#0aa04c" />
      <path fill="#fff" d="M40,14L45.500,31H63L49,41L54,58L40,48L26,58L31,41L17,31H34.500Z" />
      <path fill="#5a3a22" d="M25,24C32,18 36,22 40,25C44,22 48,18 55,24L46,29L40,27L34,29Z" />
      <path fill="#e9c320" d="M29,31H51V44L40,56L29,44Z" />
      <path fill="#28408f" d="M31,32H49V44L40,53L31,44Z" />
      <path fill="#8fd0e6" d="M34,32H46V48H34Z" />
      <path fill="#d22f2f" d="M36,37H44V42H36ZM30,42L33,50L31,50ZM50,42L47,50L49,50Z" />
      <path fill="#fff" stroke="#222" strokeWidth="1" d="M12,66Q40,74 68,66L69,74L62,78L58,76Q40,80 22,76L18,78L11,74Z" />
      <g fontFamily="Liberation Sans, sans-serif" fontWeight="700" fontSize="5" fill="#111">
        <text><textPath href="#arcTop" startOffset="50%" textAnchor="middle">REPUBLICA DE COLOMBIA</textPath></text>
        <text><textPath href="#arcBottom" startOffset="50%" textAnchor="middle">POLICIA ★ NACIONAL</textPath></text>
        <text><textPath href="#ribbon" startOffset="50%" textAnchor="middle">DIOS Y PATRIA</textPath></text>
      </g>
    </svg>
  );
}

/* ---------- page ---------- */

const CONDENSED =
  "font-['Roboto_Condensed','Open_Sans_Condensed','Liberation_Sans_Narrow','Roboto',sans-serif]";

export default function App() {
  return (
    <div className="flex min-h-screen flex-col bg-[#0a0a0a]">
      <StatusBar />

      <header className="relative flex h-[104px] items-center bg-[#060606]">
        <Weave id="weaveTop" className="absolute inset-0 h-full w-full opacity-30" />
        <button type="button" aria-label="Información" className="relative flex h-full w-[185px] items-center justify-center font-['Liberation_Serif',serif] text-[88px] leading-[104px] font-bold text-white italic">
          i
        </button>
        <h1 className={`${CONDENSED} relative bg-linear-to-b from-white from-30% to-[#cfcfcf] to-80% bg-clip-text text-[61px] leading-[72px] font-bold text-transparent`}>
          CUADRANTE AMIGO
        </h1>
      </header>

      <WorldMap />

      <main className="relative isolate flex flex-1 flex-col bg-radial-[at_50%_45%] from-[#171717] from-30% to-[#0a0a0a] to-100%">
        <Weave id="weaveMain" className="absolute inset-0 -z-10 h-full w-full" />
        <div className="h-12 bg-linear-to-r from-[#0f1012] via-[#1b1c1e] to-[#0f1012]">
          <div className="flex h-full flex-col justify-end pb-px">
            <div className="h-2 bg-linear-to-r from-transparent from-5% via-[#8a8a8a] to-transparent to-95% blur-[1px]" />
          </div>
        </div>

        <dl className="pt-1">
          <Row icon={<ShieldIcon />} label="Nombre Cuadrante">
            <span className="text-[43px] leading-[52px] whitespace-pre">Linea </span>
            <span>123</span>
          </Row>
          <Row icon={<MapIcon />} label="Mi Ubicación">
            <span className="text-[43px] leading-[52px]">Sin conexion</span>
          </Row>
          <Row icon={<PhoneIcon />} label="Numero Celular">
            <span>123</span>
          </Row>
          <Row icon={<CalendarIcon />} label="Fecha">
            <time className="mr-8">2015/06/22</time>
            <time>08:42</time>
            <span className="text-[43px] leading-[52px]">AM</span>
          </Row>
        </dl>

        <div className="-mt-1"><Rule /></div>

        <div className="px-[213px] pt-14 pb-[73px]">
          <button type="button" className="flex h-[162px] w-full items-center rounded-2xl bg-white pt-1 text-[#149a3e] shadow-[0_0_16px_10px_rgba(255,255,255,0.06)]">
            <svg width="102" height="94" viewBox="0 0 102 94" className="ml-[114px] shrink-0" aria-hidden="true">
              <path fill="currentColor" d="M12,0H25L35,26L26,38C32,53 48,68 62,71L75,57L100,70C103,80 96,91 86,93C76,95 66,92 56,86C26,70 6,45 1,26C-1,14 4,4 12,0Z" />
            </svg>
            <span className="ml-[91px] h-[102px] w-2 shrink-0 bg-[#34a658]" />
            <span className={`${CONDENSED} ml-[78px] text-[61px] leading-[72px] font-bold whitespace-pre`}>LLAMAR  AHORA</span>
          </button>
        </div>

        <Rule />

        <footer className="flex min-h-[221px] flex-1 items-center justify-center pb-[22px]">
          <TigoLogo />
          <span className="ml-[30px] h-[82px] w-[5px] bg-[#9a9a9a]" />
          <span className="ml-[22px]"><PoliceCrest /></span>
          <span className="ml-[14px] pb-1 font-['Open_Sans',sans-serif] text-[26px] leading-[27px] font-bold text-white">
            POLICIA<br />NACIONAL
          </span>
        </footer>
      </main>

      <nav className="grid h-[168px] grid-cols-4 items-center bg-[#f5f5f5] px-[86px]" aria-label="Sistema">
        <button type="button" aria-label="Atrás" className="flex justify-center">
          <svg width="84" height="96" viewBox="0 0 84 96" fill="none" stroke={SLATE} strokeWidth="8" strokeLinejoin="round">
            <path d="M80,5V91L5,48Z" />
          </svg>
        </button>
        <button type="button" aria-label="Inicio" className="flex justify-center">
          <svg width="96" height="96" viewBox="0 0 96 96" fill="none" stroke={SLATE} strokeWidth="8">
            <circle cx="48" cy="48" r="44" />
          </svg>
        </button>
        <button type="button" aria-label="Recientes" className="flex justify-center">
          <svg width="96" height="96" viewBox="0 0 96 96" fill="none" stroke={SLATE} strokeWidth="8" strokeLinejoin="round">
            <rect x="4" y="4" width="88" height="88" />
          </svg>
        </button>
        <button type="button" aria-label="Contraer" className="flex justify-center">
          <svg width="90" height="90" viewBox="0 0 90 90" fill="none" stroke={SLATE} strokeWidth="8" strokeLinecap="round" strokeLinejoin="round">
            <path d="M5,5L30,30M31,5V31H5M85,5L60,30M59,5V31H85M5,85L30,60M31,85V59H5M85,85L60,60M59,85V59H85" />
          </svg>
        </button>
      </nav>
    </div>
  );
}
